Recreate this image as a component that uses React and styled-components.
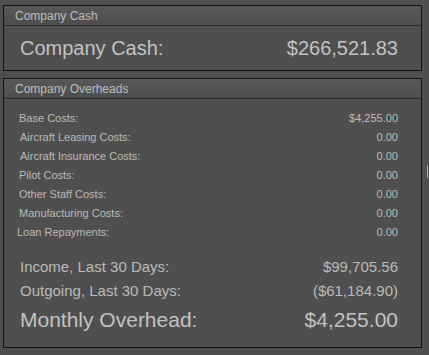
import React from "react";
import styled, { createGlobalStyle } from "styled-components";

const Global = createGlobalStyle`
  html, body {
    margin: 0;
    padding: 0;
    background: #4f4f4f;
  }
  body {
    font-family: "Liberation Sans", Arial, sans-serif;
    color: #c4c4c4;
  }
`;

const Page = styled.div`
  position: relative;
  width: 429px;
  height: 355px;
  box-sizing: border-box;
  padding: 5px 7px 0 3px;
  display: flex;
  flex-direction: column;
  gap: 7px;
  background: #4f4f4f;
  overflow: hidden;
`;

const Panel = styled.section`
  border: 1px solid #121212;
  background: #4f4f4f;
  display: flex;
  flex-direction: column;
  flex-shrink: 0;
`;

const PanelHeader = styled.div`
  height: 20px;
  box-sizing: border-box;
  padding: 2px 0 0 11px;
  line-height: 17px;
  font-size: 12px;
  color: #bdbdbd;
  background: linear-gradient(#585858, #4d4d4d);
  border-bottom: 1px solid #2b2b2b;
`;

const CashBody = styled.div`
  height: 44px;
  display: flex;
  align-items: center;
  justify-content: space-between;
  padding: 0 23px 0 16px;
  font-size: 20px;
  color: #c2c2c2;
`;

const OverheadBody = styled.div`
  height: 248px;
  box-sizing: border-box;
  padding: 10px 23px 0 0;
  display: flex;
  flex-direction: column;
`;

const Row = styled.div`
  display: flex;
  justify-content: space-between;
  align-items: center;
  height: ${(p) => p.$h}px;
  line-height: ${(p) => p.$h}px;
  font-size: ${(p) => p.$size}px;
  padding-left: ${(p) => p.$indent}px;
  margin-top: ${(p) => p.$mt || 0}px;
  color: ${(p) => p.$color || "#bababa"};
`;

const Grip = styled.div`
  position: absolute;
  right: 1px;
  top: 165px;
  width: 1px;
  height: 13px;
  background: #a8a8a8;
`;

const costs = [
  ["Base Costs:", "$4,255.00", 15],
  ["Aircraft Leasing Costs:", "0.00", 16],
  ["Aircraft Insurance Costs:", "0.00", 16],
  ["Pilot Costs:", "0.00", 15],
  ["Other Staff Costs:", "0.00", 15],
  ["Manufacturing Costs:", "0.00", 15],
  ["Loan Repayments:", "0.00", 13],
];

export default function App() {
  return (
    <>
      <Global />
      <Page>
        <Panel>
          <PanelHeader>Company Cash</PanelHeader>
          <CashBody>
            <span>Company Cash:</span>
            <span>$266,521.83</span>
          </CashBody>
        </Panel>
        <Panel>
          <PanelHeader>Company Overheads</PanelHeader>
          <OverheadBody>
            {costs.map(([label, value, indent]) => (
              <Row key={label} $h={19} $size={11} $indent={indent}>
                <span>{label}</span>
                <span>{value}</span>
              </Row>
            ))}
            <Row $h={24} $size={15} $indent={16} $mt={13}>
              <span>Income, Last 30 Days:</span>
              <span>$99,705.56</span>
            </Row>
            <Row $h={23} $size={15} $indent={16}>
              <span>Outgoing, Last 30 Days:</span>
              <span>($61,184.90)</span>
            </Row>
            <Row $h={36} $size={21} $indent={16} $color="#c2c2c2">
              <span>Monthly Overhead:</span>
              <span>$4,255.00</span>
            </Row>
          </OverheadBody>
        </Panel>
        <Grip />
      </Page>
    </>
  );
}
